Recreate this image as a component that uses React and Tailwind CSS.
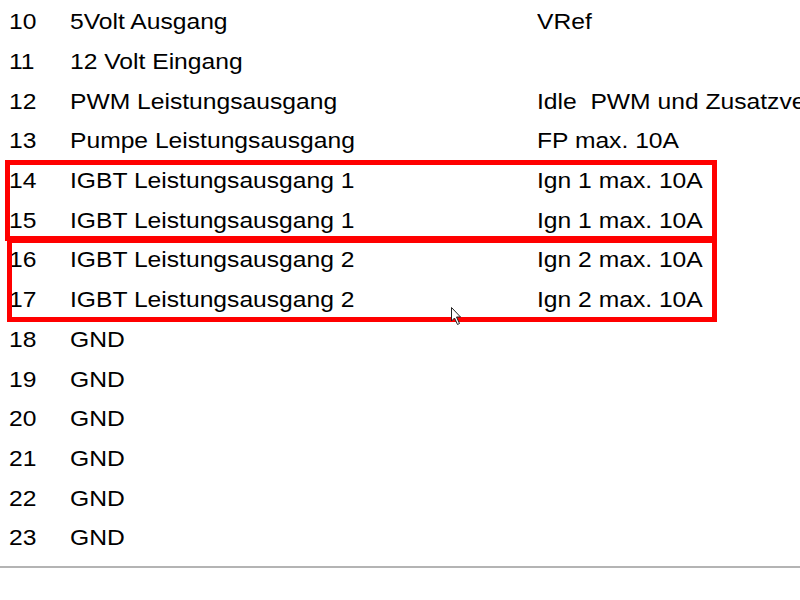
const rows = [
  ["10", "5Volt Ausgang", "VRef"],
  ["11", "12 Volt Eingang", ""],
  ["12", "PWM Leistungsausgang", "Idle\u00a0 PWM und Zusatzventil"],
  ["13", "Pumpe Leistungsausgang", "FP max. 10A"],
  ["14", "IGBT Leistungsausgang 1", "Ign 1 max. 10A"],
  ["15", "IGBT Leistungsausgang 1", "Ign 1 max. 10A"],
  ["16", "IGBT Leistungsausgang 2", "Ign 2 max. 10A"],
  ["17", "IGBT Leistungsausgang 2", "Ign 2 max. 10A"],
  ["18", "GND", ""],
  ["19", "GND", ""],
  ["20", "GND", ""],
  ["21", "GND", ""],
  ["22", "GND", ""],
  ["23", "GND", ""],
];

function Cursor() {
  return (
    <svg
      className="absolute left-[450px] top-[306px]"
      width="13"
      height="21"
      viewBox="0 0 13 21"
    >
      <path
        d="M1.5 1.5 L1.5 15 L4.5 12 L7.5 18.5 L9.5 17.5 L6.5 11 L10.5 11 Z"
        fill="#fff"
        stroke="#222"
        strokeWidth="1"
        strokeLinejoin="round"
      />
    </svg>
  );
}

export default function App() {
  return (
    <div className="relative h-[600px] w-[800px] overflow-hidden bg-white font-['Liberation_Sans',Arial,sans-serif] text-[22px] text-black">
      <div className="flex flex-col pt-[2px]">
        {rows.map(([num, name, note]) => (
          <div key={num} className="flex h-[39.7px] items-center whitespace-nowrap">
            <span className="w-[70px] shrink-0 pl-[9px]">
              <span className="inline-block origin-left scale-x-112">{num}</span>
            </span>
            <span className="w-[467px] shrink-0">
              <span className="inline-block origin-left scale-x-112">{name}</span>
            </span>
            <span>
              <span className="inline-block origin-left scale-x-112">{note}</span>
            </span>
          </div>
        ))}
      </div>

      <div className="mt-[8px] h-[2px] w-full bg-[#b4b4b4]" />

      {/* red highlight boxes */}
      <div className="absolute left-[5px] top-[160px] h-[81px] w-[712px] border-[5px] border-[#ff0000]" />
      <div className="absolute left-[7px] top-[238px] h-[84px] w-[710px] border-[5px] border-[#ff0000]" />

      <Cursor />
    </div>
  );
}
